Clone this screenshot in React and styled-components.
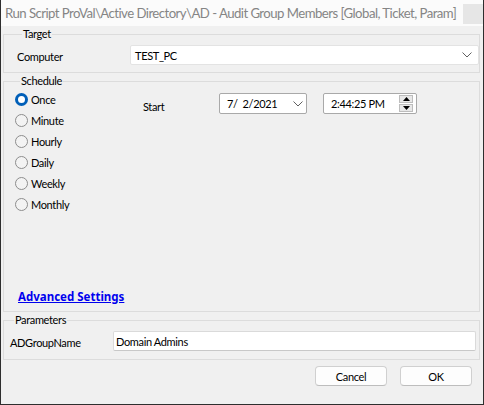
import React from "react";
import styled, { createGlobalStyle } from "styled-components";

const Global = createGlobalStyle`
  html, body { margin: 0; padding: 0; background: #f0f0f0; }
  body { font-family: Lato, "Noto Sans", sans-serif; font-size: 11px; letter-spacing: -0.35px; color: #000; }
  * { box-sizing: border-box; }
`;

const Window = styled.div`
  width: 484px;
  height: 405px;
  background: #f0f0f0;
  border: 1px solid #2e2e2e;
  border-top: none;
  display: flex;
  flex-direction: column;
`;

const TitleBar = styled.div`
  height: 26px;
  background: #fbfbfb;
  display: flex;
  align-items: center;
  justify-content: space-between;
  padding: 0 0 0 4px;
`;

const TitleText = styled.div`
  font-size: 13.2px;
  letter-spacing: -0.55px;
  color: #858585;
  white-space: nowrap;
`;

const CloseBox = styled.div`
  width: 20px;
  height: 20px;
  background: #e6e6e6;
  align-self: flex-start;
  margin-top: 4px;
  flex: none;
`;

const Body = styled.div`
  flex: 1;
  padding: 0 3px 0 2px;
  display: flex;
  flex-direction: column;
`;

const Group = styled.fieldset`
  margin: 0;
  min-width: 0;
  border: 1px solid #dcdcdc;
  padding: ${(p) => p.$pad};
`;

const Legend = styled.legend`
  padding: 0 1px;
  margin-left: ${(p) => p.$ml || 5}px;
  line-height: 16px;
`;

const FieldRow = styled.div`
  display: flex;
  align-items: center;
`;

const FieldLabel = styled.div`
  width: ${(p) => p.$w}px;
  flex: none;
  line-height: 16px;
  padding-top: ${(p) => p.$pt || 0}px;
`;

const Combo = styled.div`
  flex: 1;
  height: 20px;
  background: #fff;
  border: 1px solid #e3e3e3;
  border-radius: 2px;
  display: flex;
  align-items: center;
  justify-content: space-between;
  padding: 0 6px 0 4px;
`;

const TextInput = styled.div`
  flex: 1;
  height: 20px;
  background: #fff;
  border: 1px solid #dadada;
  border-bottom-color: #c8c8c8;
  border-radius: 2px;
  display: flex;
  align-items: center;
  padding: 0 2px;
`;

const ScheduleBody = styled.div`
  height: 216px;
  display: flex;
  flex-direction: column;
`;

const ScheduleTop = styled.div`
  display: flex;
  align-items: flex-start;
`;

const RadioList = styled.div`
  width: 128px;
  flex: none;
  display: flex;
  flex-direction: column;
`;

const RadioRow = styled.div`
  height: 21px;
  display: flex;
  align-items: center;
  gap: 3px;
`;

const RadioCircle = styled.span`
  width: 13px;
  height: 13px;
  border-radius: 50%;
  flex: none;
  background: ${(p) => (p.$on ? "#fff" : "#f3f3f3")};
  border: ${(p) => (p.$on ? "3.5px solid #005fb8" : "1px solid #8d8d8d")};
`;

const StartArea = styled.div`
  display: flex;
  align-items: center;
  margin-top: 4px;
`;

const StartLabel = styled.div`
  width: 76px;
  flex: none;
  padding-top: 6px;
`;

const PickerBox = styled.div`
  width: ${(p) => p.$w}px;
  height: 21px;
  margin-right: ${(p) => p.$mr || 0}px;
  background: #fff;
  border: 1px solid #a9a9a9;
  border-radius: 2px;
  display: flex;
  align-items: center;
  justify-content: space-between;
  padding: 0 3px 0 7px;
`;

const Spin = styled.div`
  width: 14px;
  height: 17px;
  display: flex;
  flex-direction: column;
  gap: 1px;
`;

const SpinBtn = styled.div`
  flex: 1;
  background: #e8e8e8;
  border: 1px solid #bdbdbd;
  display: flex;
  align-items: center;
  justify-content: center;
`;

const LinkText = styled.a`
  margin-top: auto;
  margin-left: 3px;
  align-self: flex-start;
  color: #0000ee;
  font-family: "Noto Sans", sans-serif;
  font-size: 11.5px;
  letter-spacing: 0;
  font-weight: 700;
  text-decoration: underline;
  line-height: 16px;
  cursor: pointer;
`;

const ButtonRow = styled.div`
  display: flex;
  justify-content: flex-end;
  gap: 13px;
  padding: 6px 8px 0 0;
`;

const Button = styled.button`
  width: 72px;
  height: 20px;
  font: inherit;
  letter-spacing: inherit;
  color: #000;
  background: #fdfdfd;
  border: 1px solid #d0d0d0;
  border-bottom-color: #bdbdbd;
  border-radius: 4px;
  padding: 0;
`;

const Chevron = () => (
  <svg width="10" height="6" viewBox="0 0 10 6">
    <path d="M0.5 0.5 L5 5 L9.5 0.5" fill="none" stroke="#606060" strokeWidth="1" />
  </svg>
);

const Tri = ({ up }) => (
  <svg width="7" height="4" viewBox="0 0 7 4">
    <path d={up ? "M0 4 L3.5 0 L7 4 Z" : "M0 0 L3.5 4 L7 0 Z"} fill="#000" />
  </svg>
);

const radios = ["Once", "Minute", "Hourly", "Daily", "Weekly", "Monthly"];

export default function App() {
  return (
    <>
      <Global />
      <Window>
        <TitleBar>
          <TitleText>Run Script ProVal\Active Directory\AD - Audit Group Members [Global, Ticket, Param]</TitleText>
          <CloseBox />
        </TitleBar>
        <Body>
          <Group $pad="3px 0 7px 13px">
            <Legend $ml={5}>Target</Legend>
            <FieldRow>
              <FieldLabel $w={113} $pt={4}>Computer</FieldLabel>
              <Combo>
                <span>TEST_PC</span>
                <Chevron />
              </Combo>
            </FieldRow>
          </Group>
          <Group $pad="0 0 6px 11px">
            <Legend $ml={5}>Schedule</Legend>
            <ScheduleBody>
              <ScheduleTop>
                <RadioList>
                  {radios.map((r, i) => (
                    <RadioRow key={r}>
                      <RadioCircle $on={i === 0} />
                      <span>{r}</span>
                    </RadioRow>
                  ))}
                </RadioList>
                <StartArea>
                  <StartLabel>Start</StartLabel>
                  <PickerBox $w={88} $mr={16}>
                    <span>7/&nbsp; 2/2021</span>
                    <Chevron />
                  </PickerBox>
                  <PickerBox $w={94}>
                    <span>2:44:25 PM</span>
                    <Spin>
                      <SpinBtn><Tri up /></SpinBtn>
                      <SpinBtn><Tri /></SpinBtn>
                    </Spin>
                  </PickerBox>
                </StartArea>
              </ScheduleTop>
              <LinkText>Advanced Settings</LinkText>
            </ScheduleBody>
          </Group>
          <Group $pad="3px 3px 8px 6px">
            <Legend $ml={4}>Parameters</Legend>
            <FieldRow>
              <FieldLabel $w={103} $pt={4}>ADGroupName</FieldLabel>
              <TextInput>Domain Admins</TextInput>
            </FieldRow>
          </Group>
          <ButtonRow>
            <Button>Cancel</Button>
            <Button>OK</Button>
          </ButtonRow>
        </Body>
      </Window>
    </>
  );
}
